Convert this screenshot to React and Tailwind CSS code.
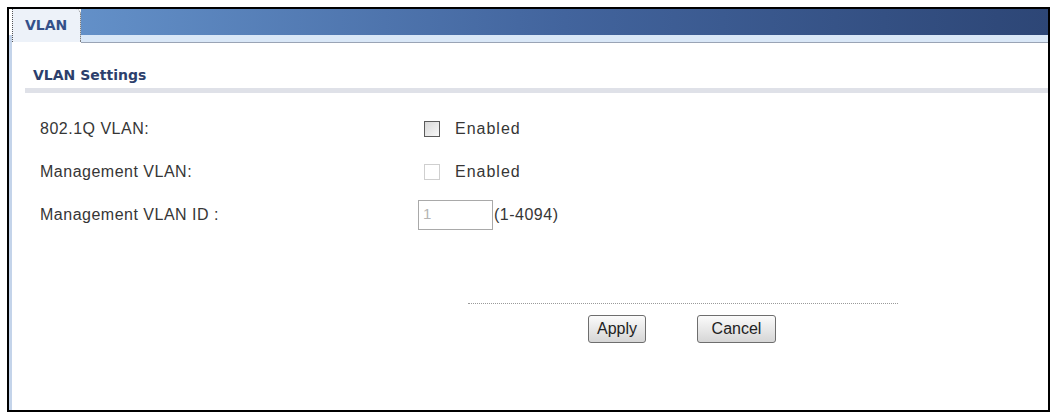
export default function App() {
  const label = "w-[378px] shrink-0";
  return (
    <div className="w-[1059px] h-[417px] bg-white pt-[7px] pl-[7px]" style={{ fontFamily: '"Liberation Sans", Arial, sans-serif' }}>
      <div className="w-[1043px] h-[405px] border-2 border-black flex flex-col bg-white">
        {/* header */}
        <div className="flex h-[34px] shrink-0">
          <div className="w-[3px] flex flex-col">
            <div className="h-[26px] bg-white" />
            <div className="flex-1 bg-[#c4d4ea]" />
          </div>
          <div className="w-[69px] h-[33px] bg-[#edf2f9] border-l border-r border-dotted border-[#555] rounded-tr-[5px] flex items-center pl-[12px]">
            <span className="text-[14px] font-bold text-[#34508a] leading-none -mt-[2px]" style={{ fontFamily: '"DejaVu Sans", Verdana, sans-serif' }}>VLAN</span>
          </div>
          <div className="flex-1 flex flex-col">
            <div className="h-[26px] bg-linear-to-r from-[#6390c8] via-[#42649d] to-[#2d4676]" />
            <div className="h-[7px] bg-[#d9e7f7]" />
            <div className="h-[1px] bg-[#9aa4b5]" />
          </div>
        </div>
        {/* body */}
        <div className="flex-1 border-l-[3px] border-[#c4d4ea] flex flex-col">
          <div className="mt-[23px] pl-[21px] h-[18px] flex items-center">
            <span className="text-[14px] font-bold text-[#2c3f6c]" style={{ fontFamily: '"DejaVu Sans", Verdana, sans-serif' }}>VLAN Settings</span>
          </div>
          <div className="mt-[4px] ml-[13px] h-[5px] bg-[#dfe1e8]" />
          <div className="mt-[14px] pl-[28px] flex flex-col text-[16px] text-[#363636] tracking-[0.5px]">
            <div className="h-[43px] flex items-center">
              <div className={label}>802.1Q VLAN:</div>
              <div className="ml-[6px] w-[16px] h-[16px] border border-[#5a5a5a] bg-linear-to-br from-[#d8d8d8] to-[#f8f8f8]" />
              <span className="ml-[15px] tracking-[1px]">Enabled</span>
            </div>
            <div className="h-[43px] flex items-center">
              <div className={label}>Management VLAN:</div>
              <div className="ml-[6px] w-[16px] h-[16px] border border-[#cfcfcf] bg-white" />
              <span className="ml-[15px] tracking-[1px]">Enabled</span>
            </div>
            <div className="h-[43px] flex items-center">
              <div className={label}>Management VLAN ID :</div>
              <div className="w-[75px] h-[30px] border border-[#a9a9a9] bg-white flex items-center pl-[4px] text-[#b5b5b5] text-[15px]">1</div>
              <span className="ml-[1px]">(1-4094)</span>
            </div>
          </div>
          <div className="mt-[67px] ml-[456px] w-[430px] border-t border-dotted border-[#9a9a9a]" />
          <div className="mt-[11px] ml-[576px] flex gap-[51px] text-[16px] text-[#222]">
            <button className="w-[58px] h-[28px] border border-[#6e6e6e] rounded-[3px] bg-linear-to-b from-[#fbfbfb] to-[#d6d6d6] flex items-center justify-center">Apply</button>
            <button className="w-[79px] h-[28px] border border-[#6e6e6e] rounded-[3px] bg-linear-to-b from-[#fbfbfb] to-[#d6d6d6] flex items-center justify-center">Cancel</button>
          </div>
        </div>
      </div>
    </div>
  );
}
